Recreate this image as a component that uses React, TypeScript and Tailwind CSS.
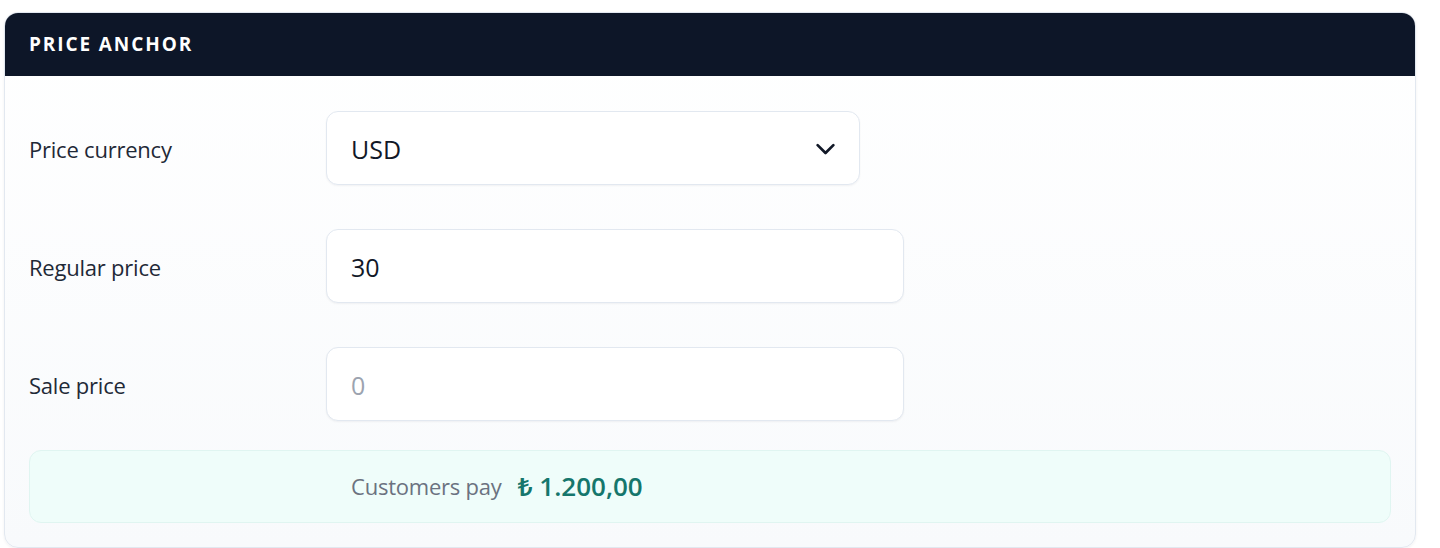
import React from "react";

const font = { fontFamily: '"Open Sans", "Noto Sans", "Liberation Sans", sans-serif' };

function Row({ label, children }: { label: string; children: React.ReactNode }) {
  return (
    <div className="flex items-center">
      <div className="w-[297px] shrink-0 pt-[3px] text-[22px] tracking-[-0.01em] text-[#1f2937]">{label}</div>
      {children}
    </div>
  );
}

export default function App() {
  return (
    <div className="min-h-[548px] bg-white pt-3 pl-1 pr-6" style={font}>
      <div className="w-[1412px] overflow-hidden rounded-[14px] border border-[#e2e8f0] bg-gradient-to-b from-white to-[#f8fafc] shadow-[0_1px_3px_rgba(15,23,42,0.06)]">
        <div className="flex h-[63px] items-center bg-[#0d1628] px-6">
          <span className="text-[19px] font-bold tracking-[0.1em] text-white">PRICE ANCHOR</span>
        </div>
        <div className="flex flex-col gap-[44px] px-6 pt-[35px]">
          <Row label="Price currency">
            <div className="flex h-[74px] w-[534px] items-center justify-between rounded-[12px] border border-[#e2e8f0] bg-white pl-6 pr-[20px] shadow-[0_1px_2px_rgba(15,23,42,0.05)]">
              <span className="pt-[3px] text-[25px] text-[#111827]">USD</span>
              <svg width="27" height="27" viewBox="0 0 24 24" fill="none" stroke="#111827" strokeWidth="2.4" strokeLinecap="round" strokeLinejoin="round">
                <path d="M5 9l7 7 7-7" />
              </svg>
            </div>
          </Row>
          <Row label="Regular price">
            <div className="flex h-[74px] w-[578px] items-center rounded-[12px] border border-[#e2e8f0] bg-white px-6 shadow-[0_1px_2px_rgba(15,23,42,0.05)]">
              <span className="pt-[3px] text-[25px] text-[#111827]">30</span>
            </div>
          </Row>
          <Row label="Sale price">
            <div className="flex h-[74px] w-[578px] items-center rounded-[12px] border border-[#e2e8f0] bg-white px-6 shadow-[0_1px_2px_rgba(15,23,42,0.05)]">
              <span className="pt-[3px] text-[25px] text-[#9ca3af]">0</span>
            </div>
          </Row>
        </div>
        <div className="px-6 pb-6 pt-[29px]">
          <div className="flex h-[73px] items-center rounded-[12px] border border-[#e0f5f1] bg-[#effdfa] pl-[321px]">
            <span className="text-[22px] tracking-[-0.01em] text-[#6b7280]">Customers pay</span>
            <span className="ml-4 text-[26px] font-semibold text-[#15766c]">₺ 1.200,00</span>
          </div>
        </div>
      </div>
    </div>
  );
}
